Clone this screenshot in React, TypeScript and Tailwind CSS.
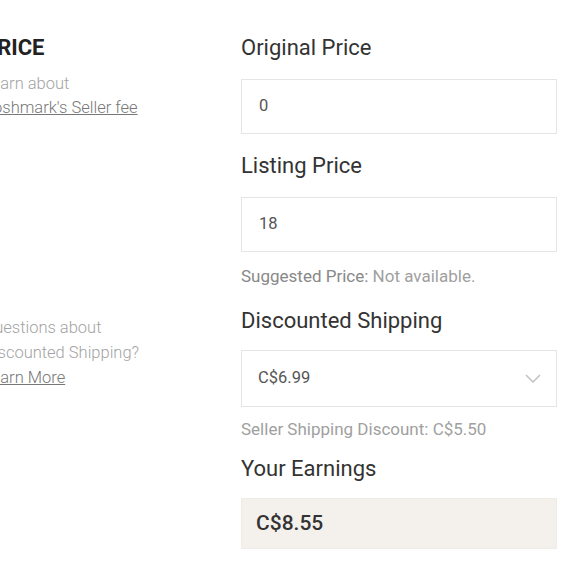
import * as React from "react";

function Field({ value }: { value: string }) {
  return (
    <div className="h-[55px] border border-[#e5e5e5] bg-white flex items-center px-[17px] text-[16.5px] text-[#555]">
      {value}
    </div>
  );
}

export default function App() {
  return (
    <div className="w-[580px] h-[580px] bg-white overflow-hidden font-['Roboto',sans-serif]">
      <div className="flex pt-[34px] -ml-[17px]">
        <div className="w-[258px] shrink-0 flex flex-col">
          <h2 className="text-[22px] leading-[28px] font-bold text-[#222]">PRICE</h2>
          <p className="mt-[10px] text-[16.5px] leading-[24px] font-light text-[#a3a3a3]">
            Learn about
            <br />
            <a className="underline text-[#777]">Poshmark's Seller fee</a>
          </p>
          <p className="mt-[195px] text-[16.5px] leading-[25px] font-light text-[#a3a3a3]">
            Questions about
            <br />
            Discounted Shipping?
            <br />
            <a className="underline text-[#777]">Learn More</a>
          </p>
        </div>
        <div className="w-[316px] shrink-0 flex flex-col">
          <label className="text-[22px] leading-[28px] text-[#333]">Original Price</label>
          <div className="mt-[17px]">
            <Field value="0" />
          </div>
          <label className="mt-[18px] text-[22px] leading-[28px] text-[#333]">Listing Price</label>
          <div className="mt-[17px]">
            <Field value="18" />
          </div>
          <p className="mt-[14px] text-[17px] leading-[20px] text-[#a0a0a0]">
            <span className="text-[#888]">Suggested Price:</span> Not available.
          </p>
          <label className="mt-[21px] text-[22px] leading-[28px] text-[#333]">Discounted Shipping</label>
          <div className="mt-[15px] h-[57px] border border-[#e5e5e5] bg-white flex items-center justify-between pl-[16px] pr-[15px] text-[16.5px] text-[#555]">
            <span>C$6.99</span>
            <svg width="16" height="9" viewBox="0 0 16 9" fill="none">
              <path d="M1 1l7 7 7-7" stroke="#c4c4c4" strokeWidth="1.6" />
            </svg>
          </div>
          <p className="mt-[12px] text-[17px] leading-[20px] text-[#a0a0a0]">
            Seller Shipping Discount: C$5.50
          </p>
          <label className="mt-[16px] text-[22px] leading-[28px] text-[#333]">Your Earnings</label>
          <div className="mt-[15px] h-[51px] bg-[#f4f1ed] border border-[#efebe6] flex items-center px-[14px] text-[21px] font-medium text-[#333]">
            C$8.55
          </div>
        </div>
      </div>
    </div>
  );
}
